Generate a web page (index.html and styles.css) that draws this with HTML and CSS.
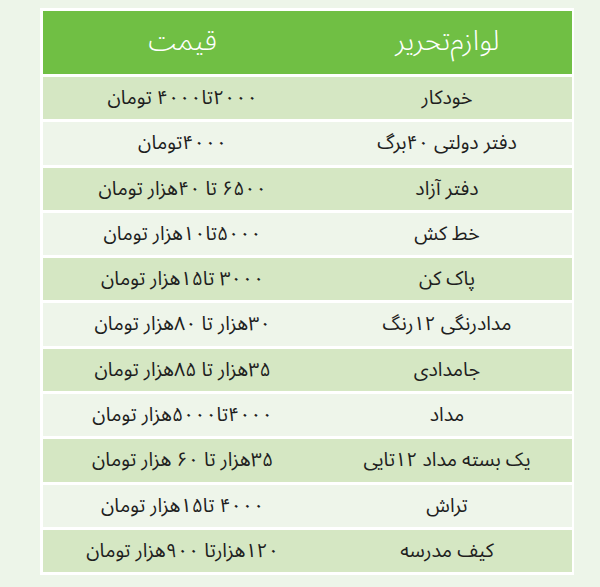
FILE: index.html
```html
<!DOCTYPE html>
<html lang="fa" dir="rtl">
<head>
<meta charset="utf-8">
<link rel="stylesheet" href="styles.css">
</head>
<body>
<div class="frame">
  <div class="table">
    <div class="row head"><div class="cell">لوازم‌تحریر</div><div class="cell">قیمت</div></div>
    <div class="row odd"><div class="cell">خودکار</div><div class="cell">۲۰۰۰تا۴۰۰۰ تومان</div></div>
    <div class="row even"><div class="cell">دفتر دولتی ۴۰برگ</div><div class="cell">۴۰۰۰تومان</div></div>
    <div class="row odd"><div class="cell">دفتر آزاد</div><div class="cell">۶۵۰۰ تا ۴۰هزار تومان</div></div>
    <div class="row even"><div class="cell">خط کش</div><div class="cell">۵۰۰۰تا۱۰هزار تومان</div></div>
    <div class="row odd"><div class="cell">پاک کن</div><div class="cell">۳۰۰۰ تا۱۵هزار تومان</div></div>
    <div class="row even"><div class="cell">مدادرنگی ۱۲رنگ</div><div class="cell">۳۰هزار تا ۸۰هزار تومان</div></div>
    <div class="row odd"><div class="cell">جامدادی</div><div class="cell">۳۵هزار تا ۸۵هزار تومان</div></div>
    <div class="row even"><div class="cell">مداد</div><div class="cell">۴۰۰۰تا۵۰۰۰هزار تومان</div></div>
    <div class="row odd"><div class="cell">یک بسته مداد ۱۲تایی</div><div class="cell">۳۵هزار تا ۶۰ هزار تومان</div></div>
    <div class="row even"><div class="cell">تراش</div><div class="cell">۴۰۰۰ تا۱۵هزار تومان</div></div>
    <div class="row odd"><div class="cell">کیف مدرسه</div><div class="cell">۱۲۰هزارتا ۹۰۰هزار تومان</div></div>
  </div>
</div>
</body>
</html>
```

FILE: styles.css
```css
html, body {
  margin: 0;
  padding: 0;
  background: #edf5e9;
}
body {
  font-family: "Noto Sans Arabic", "Vazirmatn", "DejaVu Sans", sans-serif;
  color: #1e1e1e;
}
.frame {
  margin: 8px auto 0 40px;
  width: 529px;
  padding: 3px 2px 3px 3px;
  background: #ffffff;
}
.table {
  display: flex;
  flex-direction: column;
  gap: 3px;
}
.row {
  display: grid;
  grid-template-columns: 250px 1fr;
  height: 42.3px;
}
.row.head {
  height: 63px;
  background: #70bf44;
  color: #ffffff;
}
.row.odd { background: #d5e7c3; }
.row.even { background: #eef5ea; }
.cell {
  display: flex;
  align-items: center;
  justify-content: center;
  font-size: 19.5px;
  padding-bottom: 2px;
}
.row.head .cell {
  font-size: 28px;
  font-weight: 300;
}
```
